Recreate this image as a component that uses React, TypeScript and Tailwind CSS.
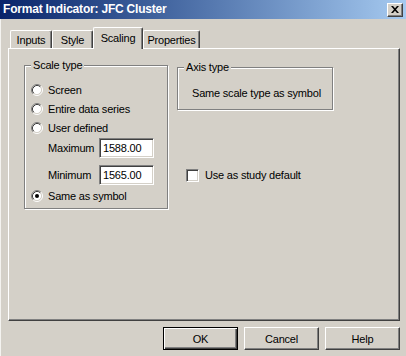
import React from "react";

const font = { fontFamily: '"Liberation Sans", Arial, sans-serif' };

function Radio({ checked }: { checked?: boolean }) {
  return (
    <svg width="12" height="12" viewBox="0 0 12 12" className="shrink-0">
      <circle cx="6" cy="6" r="4.5" fill="#ffffff" />
      <path d="M 2.11 9.89 A 5.5 5.5 0 0 1 9.89 2.11" stroke="#808080" strokeWidth="1" fill="none" />
      <path d="M 9.89 2.11 A 5.5 5.5 0 0 1 2.11 9.89" stroke="#ffffff" strokeWidth="1" fill="none" />
      <path d="M 2.82 9.18 A 4.5 4.5 0 0 1 9.18 2.82" stroke="#404040" strokeWidth="1" fill="none" />
      <path d="M 9.18 2.82 A 4.5 4.5 0 0 1 2.82 9.18" stroke="#d4d0c8" strokeWidth="1" fill="none" />
      {checked && <circle cx="6" cy="6" r="2" fill="#000000" />}
    </svg>
  );
}

function RadioRow({ label, checked, h }: { label: string; checked?: boolean; h: string }) {
  return (
    <div className={`flex items-center pl-[6px] ${h}`}>
      <Radio checked={checked} />
      <span className="ml-[5px] leading-[14px]">{label}</span>
    </div>
  );
}

function Field({ value }: { value: string }) {
  return (
    <div className="w-[55px] h-[20px] bg-white border-t border-l border-t-[#808080] border-l-[#808080] border-b border-r border-b-white border-r-white shadow-[inset_1px_1px_0_#404040,inset_-1px_-1px_0_#d4d0c8] flex items-center pl-[3px] text-black leading-[14px]">
      {value}
    </div>
  );
}

function Tab({ label, w, selected }: { label: string; w: string; selected?: boolean }) {
  if (selected) {
    return (
      <div
        className={`${w} h-[22px] -mb-[1px] relative z-10 bg-[#d4d0c8] border-l border-t border-l-white border-t-white border-r border-r-[#404040] rounded-tl-[2px] rounded-tr-[2px] shadow-[inset_-1px_0_0_#808080] flex items-start justify-center pt-[3px] leading-[14px]`}
      >
        {label}
      </div>
    );
  }
  return (
    <div
      className={`${w} h-[18px] bg-[#d4d0c8] border-l border-t border-l-white border-t-white border-r border-r-[#404040] rounded-tl-[2px] rounded-tr-[2px] shadow-[inset_-1px_0_0_#808080] flex items-start justify-center pt-[2px] leading-[14px]`}
    >
      {label}
    </div>
  );
}

function Button({ label, def }: { label: string; def?: boolean }) {
  if (def) {
    return (
      <div className="w-[75px] h-[23px] border border-black shadow-[inset_1px_1px_0_#ffffff,inset_-1px_-1px_0_#404040,inset_-2px_-2px_0_#808080] flex items-center justify-center leading-[14px]">
        {label}
      </div>
    );
  }
  return (
    <div className="w-[75px] h-[23px] border-t border-l border-t-white border-l-white border-b border-r border-b-[#404040] border-r-[#404040] shadow-[inset_-1px_-1px_0_#808080] flex items-center justify-center leading-[14px]">
      {label}
    </div>
  );
}

export default function App() {
  return (
    <div
      className="w-[406px] h-[356px] bg-[#d4d0c8] text-black text-[11px] tracking-[-0.2px] flex flex-col overflow-hidden"
      style={font}
    >
      {/* Title bar */}
      <div className="h-[19px] shrink-0 flex items-center justify-between bg-gradient-to-r from-[#0a246a] to-[#a6caf0]">
        <span className="pl-[3px] text-white font-bold text-[12px] tracking-[-0.2px] leading-[15px]">
          Format Indicator: JFC Cluster
        </span>
        <div className="mr-[3px] w-[16px] h-[14px] bg-[#d4d0c8] border-t border-l border-t-white border-l-white border-b border-r border-b-[#404040] border-r-[#404040] shadow-[inset_-1px_-1px_0_#808080] flex items-center justify-center">
          <svg width="8" height="7" viewBox="0 0 8 7">
            <path d="M0 0 L2 0 L4 2.2 L6 0 L8 0 L5 3.5 L8 7 L6 7 L4 4.8 L2 7 L0 7 L3 3.5 Z" fill="#000" />
          </svg>
        </div>
      </div>

      <div className="flex-1 flex flex-col border-l border-l-[#f4f3f0]">
        {/* Tabs */}
        <div className="mt-[9px] h-[20px] flex items-end pl-[9px]">
          <Tab label="Inputs" w="w-[42px]" />
          <Tab label="Style" w="w-[41px]" />
          <Tab label="Scaling" w="w-[50px]" selected />
          <Tab label="Properties" w="w-[57px]" />
        </div>

        {/* Panel */}
        <div className="ml-[7px] mr-[6px] h-[273px] border-t border-l border-t-white border-l-white border-b border-r border-b-[#404040] border-r-[#404040] shadow-[inset_-1px_-1px_0_#808080] flex items-start pl-[15px] pt-[16px]">
          {/* Scale type group */}
          <div className="relative w-[144px] h-[144px] border border-[#808080] shadow-[inset_1px_1px_0_#ffffff,1px_1px_0_#ffffff]">
            <span className="absolute -top-[8px] left-[6px] px-[2px] bg-[#d4d0c8] leading-[14px]">Scale type</span>
            <div className="flex flex-col pt-[14px]">
              <RadioRow label="Screen" h="h-[19px]" />
              <RadioRow label="Entire data series" h="h-[19px]" />
              <RadioRow label="User defined" h="h-[20px]" />
              <div className="h-[20px] flex items-center pl-[23px]">
                <span className="w-[51px] leading-[14px]">Maximum</span>
                <Field value="1588.00" />
              </div>
              <div className="mt-[7px] h-[20px] flex items-center pl-[23px]">
                <span className="w-[51px] leading-[14px]">Minimum</span>
                <Field value="1565.00" />
              </div>
              <div className="mt-[1px]">
                <RadioRow label="Same as symbol" checked h="h-[20px]" />
              </div>
            </div>
          </div>

          {/* Right column */}
          <div className="ml-[9px] flex flex-col">
            <div className="relative mt-[2px] w-[156px] h-[43px] border border-[#808080] shadow-[inset_1px_1px_0_#ffffff,1px_1px_0_#ffffff]">
              <span className="absolute -top-[8px] left-[6px] px-[2px] bg-[#d4d0c8] leading-[14px]">Axis type</span>
              <div className="pl-[14px] pt-[18px] leading-[14px]">Same scale type as symbol</div>
            </div>
            <div className="mt-[58px] ml-[9px] flex items-center">
              <div className="w-[13px] h-[13px] bg-white border-t border-l border-t-[#808080] border-l-[#808080] border-b border-r border-b-white border-r-white shadow-[inset_1px_1px_0_#404040,inset_-1px_-1px_0_#d4d0c8]" />
              <span className="ml-[6px] leading-[14px]">Use as study default</span>
            </div>
          </div>
        </div>

        {/* Buttons */}
        <div className="mt-[6px] mr-[6px] flex justify-end gap-[6px]">
          <Button label="OK" def />
          <Button label="Cancel" />
          <Button label="Help" />
        </div>
      </div>
    </div>
  );
}
